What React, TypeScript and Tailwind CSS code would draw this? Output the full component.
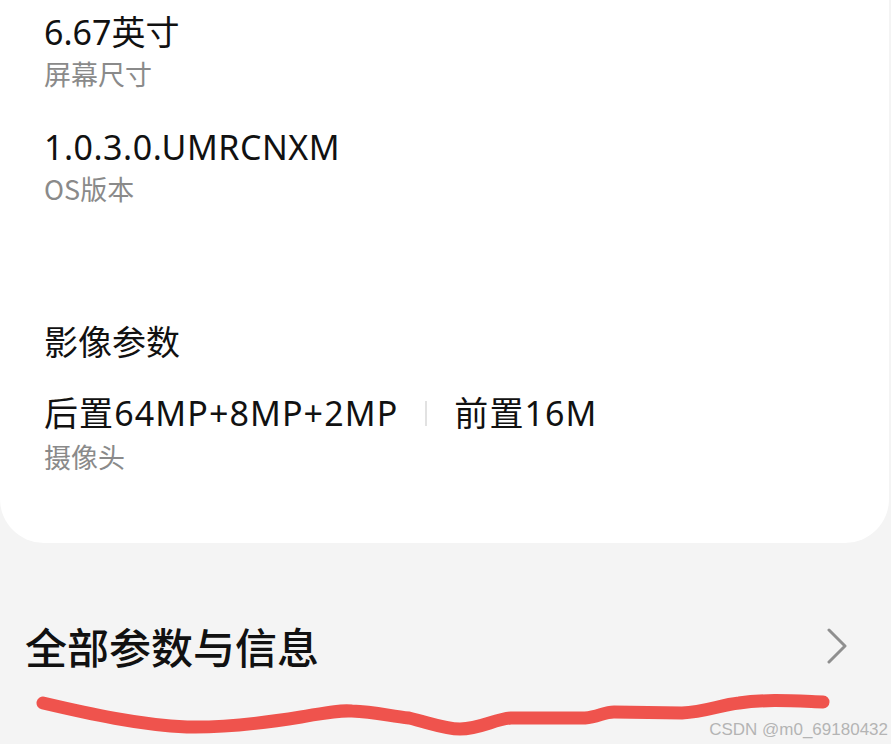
export default function App() {
  const font = { fontFamily: '"Noto Sans CJK SC", "Noto Sans", sans-serif' }
  const valueFont = { fontFamily: '"Noto Sans", "Noto Sans CJK SC", sans-serif' }

  return (
    <div className="relative w-[891px] h-[744px] overflow-hidden bg-[#f4f4f4]" style={font}>
      {/* card */}
      <div className="w-[889px] bg-white rounded-b-[44px] pl-[44px] pt-[12px] pb-[70px]">
        <div className="text-[34px] leading-[40px] text-[#111]" style={valueFont}>6.67英寸</div>
        <div className="mt-[6px] text-[27px] leading-[32px] text-[#8a8a8a]">屏幕尺寸</div>

        <div className="mt-[37px] text-[34px] leading-[40px] tracking-[0.5px] text-[#111]" style={valueFont}>1.0.3.0.UMRCNXM</div>
        <div className="mt-[6px] text-[27px] leading-[32px] text-[#8a8a8a]">OS版本</div>

        <div className="mt-[116px] text-[34px] leading-[40px] text-[#111]">影像参数</div>

        <div className="mt-[32px] flex items-center text-[34px] leading-[40px] tracking-[1.1px] text-[#111]" style={valueFont}>
          <span>后置64MP+8MP+2MP</span>
          <span className="mx-[27px] w-[2px] h-[25px] bg-[#e2e2e2]"></span>
          <span>前置16M</span>
        </div>
        <div className="mt-[8px] text-[27px] leading-[32px] text-[#8a8a8a]">摄像头</div>
      </div>

      {/* all params row */}
      <div className="mt-[78px] flex items-center justify-between pl-[25px] pr-[44px] h-[50px]">
        <span className="text-[42px] leading-[50px] font-medium text-[#111]">全部参数与信息</span>
        <svg width="20" height="36" viewBox="0 0 20 36" fill="none">
          <path d="M2 2 L18 18 L2 34" stroke="#8f8f8f" strokeWidth="3" strokeLinecap="round" strokeLinejoin="round" />
        </svg>
      </div>

      {/* red hand-drawn underline */}
      <svg className="absolute left-0 top-0" width="891" height="744" viewBox="0 0 891 744" fill="none">
        <path
          d="M43 703 C90 714 140 725 187 727 C230 728 270 722 301 717 C325 713 338 710 352 711 C375 712 390 716 409 718 C430 723 445 729 460 729 C480 729 495 719 511 718 L585 718 C598 717 604 712 614 712 L682 713 C705 712 720 705 739 703 C765 699 795 701 823 702"
          stroke="#ef534d"
          strokeWidth="13"
          strokeLinecap="round"
          strokeLinejoin="round"
        />
      </svg>

      {/* watermark */}
      <div
        className="absolute right-[3px] bottom-[4px] text-[17px] leading-[20px] text-[#b4b4b4]"
        style={{ fontFamily: '"Liberation Sans", Arial, sans-serif' }}
      >
        CSDN @m0_69180432
      </div>
    </div>
  )
}
